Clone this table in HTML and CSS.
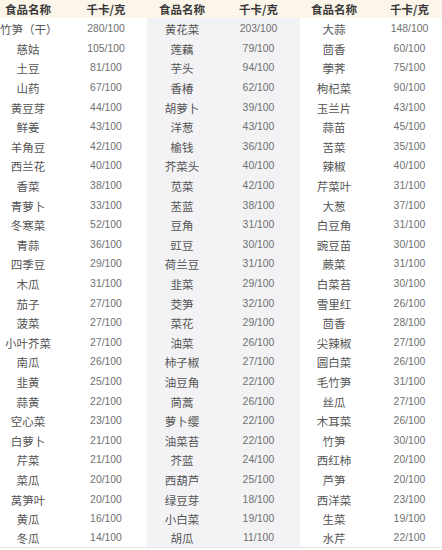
FILE: index.html
```html
<!DOCTYPE html>
<html lang="zh">
<head>
<meta charset="utf-8">
<link rel="stylesheet" href="styles.css">
</head>
<body>
<table class="cal">
<colgroup>
<col class="c1"><col class="c2"><col class="c3"><col class="c4"><col class="c5"><col class="c6">
</colgroup>
<thead>
<tr><th>食品名称</th><th class="v">千卡/克</th><th>食品名称</th><th class="v">千卡/克</th><th>食品名称</th><th class="v">千卡/克</th></tr>
</thead>
<tbody>
<tr><td>竹笋（干）</td><td class="v">280/100</td><td class="g">黄花菜</td><td class="g v">203/100</td><td>大蒜</td><td class="v">148/100</td></tr>
<tr><td>慈姑</td><td class="v">105/100</td><td class="g">莲藕</td><td class="g v">79/100</td><td>茴香</td><td class="v">60/100</td></tr>
<tr><td>土豆</td><td class="v">81/100</td><td class="g">芋头</td><td class="g v">94/100</td><td>荸荠</td><td class="v">75/100</td></tr>
<tr><td>山药</td><td class="v">67/100</td><td class="g">香椿</td><td class="g v">62/100</td><td>枸杞菜</td><td class="v">90/100</td></tr>
<tr><td>黄豆芽</td><td class="v">44/100</td><td class="g">胡萝卜</td><td class="g v">39/100</td><td>玉兰片</td><td class="v">43/100</td></tr>
<tr><td>鲜姜</td><td class="v">43/100</td><td class="g">洋葱</td><td class="g v">43/100</td><td>蒜苗</td><td class="v">45/100</td></tr>
<tr><td>羊角豆</td><td class="v">42/100</td><td class="g">榆钱</td><td class="g v">36/100</td><td>苦菜</td><td class="v">35/100</td></tr>
<tr><td>西兰花</td><td class="v">40/100</td><td class="g">芥菜头</td><td class="g v">40/100</td><td>辣椒</td><td class="v">40/100</td></tr>
<tr><td>香菜</td><td class="v">38/100</td><td class="g">苋菜</td><td class="g v">42/100</td><td>芹菜叶</td><td class="v">31/100</td></tr>
<tr><td>青萝卜</td><td class="v">33/100</td><td class="g">苤蓝</td><td class="g v">38/100</td><td>大葱</td><td class="v">37/100</td></tr>
<tr><td>冬寒菜</td><td class="v">52/100</td><td class="g">豆角</td><td class="g v">31/100</td><td>白豆角</td><td class="v">31/100</td></tr>
<tr><td>青蒜</td><td class="v">36/100</td><td class="g">豇豆</td><td class="g v">30/100</td><td>豌豆苗</td><td class="v">30/100</td></tr>
<tr><td>四季豆</td><td class="v">29/100</td><td class="g">荷兰豆</td><td class="g v">31/100</td><td>蕨菜</td><td class="v">31/100</td></tr>
<tr><td>木瓜</td><td class="v">31/100</td><td class="g">韭菜</td><td class="g v">29/100</td><td>白菜苔</td><td class="v">30/100</td></tr>
<tr><td>茄子</td><td class="v">27/100</td><td class="g">茭笋</td><td class="g v">32/100</td><td>雪里红</td><td class="v">26/100</td></tr>
<tr><td>菠菜</td><td class="v">27/100</td><td class="g">菜花</td><td class="g v">29/100</td><td>茴香</td><td class="v">28/100</td></tr>
<tr><td>小叶芥菜</td><td class="v">27/100</td><td class="g">油菜</td><td class="g v">26/100</td><td>尖辣椒</td><td class="v">27/100</td></tr>
<tr><td>南瓜</td><td class="v">26/100</td><td class="g">柿子椒</td><td class="g v">27/100</td><td>圆白菜</td><td class="v">26/100</td></tr>
<tr><td>韭黄</td><td class="v">25/100</td><td class="g">油豆角</td><td class="g v">22/100</td><td>毛竹笋</td><td class="v">31/100</td></tr>
<tr><td>蒜黄</td><td class="v">22/100</td><td class="g">茼蒿</td><td class="g v">26/100</td><td>丝瓜</td><td class="v">27/100</td></tr>
<tr><td>空心菜</td><td class="v">23/100</td><td class="g">萝卜缨</td><td class="g v">22/100</td><td>木耳菜</td><td class="v">26/100</td></tr>
<tr><td>白萝卜</td><td class="v">21/100</td><td class="g">油菜苔</td><td class="g v">22/100</td><td>竹笋</td><td class="v">30/100</td></tr>
<tr><td>芹菜</td><td class="v">21/100</td><td class="g">芥蓝</td><td class="g v">24/100</td><td>西红柿</td><td class="v">20/100</td></tr>
<tr><td>菜瓜</td><td class="v">20/100</td><td class="g">西葫芦</td><td class="g v">25/100</td><td>芦笋</td><td class="v">20/100</td></tr>
<tr><td>莴笋叶</td><td class="v">20/100</td><td class="g">绿豆芽</td><td class="g v">18/100</td><td>西洋菜</td><td class="v">23/100</td></tr>
<tr><td>黄瓜</td><td class="v">16/100</td><td class="g">小白菜</td><td class="g v">19/100</td><td>生菜</td><td class="v">19/100</td></tr>
<tr><td>冬瓜</td><td class="v">14/100</td><td class="g">胡瓜</td><td class="g v">11/100</td><td>水芹</td><td class="v">22/100</td></tr>
</tbody>
</table>
</body>
</html>
```

FILE: styles.css
```css
html, body {
  margin: 0;
  padding: 0;
  background: #ffffff;
}

.cal {
  width: 442px;
  border-collapse: collapse;
  table-layout: fixed;
  font-family: "Noto Sans CJK SC", "Liberation Sans", sans-serif;
  border-bottom: 1px solid #e3e3e3;
}

.c1 { width: 56px; }
.c2 { width: 91px; }
.c3 { width: 70px; }
.c4 { width: 83px; }
.c5 { width: 68px; }
.c6 { width: 74px; }

.cal thead tr {
  background: #fbf5ea;
}

.cal th {
  font-size: 11.5px;
  font-weight: bold;
  color: #3a3a3a;
  text-align: center;
  padding: 0;
  height: 18px;
  line-height: 16px;
  white-space: nowrap;
}

.cal td {
  height: 19.6px;
  padding: 3px 0 0 0;
  box-sizing: border-box;
  line-height: 16px;
  font-size: 11.5px;
  color: #555555;
  text-align: center;
  white-space: nowrap;
}

.cal td.v {
  font-family: "Liberation Sans", sans-serif;
  font-size: 10.4px;
  color: #707070;
}

.cal th:nth-child(2), .cal td:nth-child(2) {
  padding-left: 9px;
}

.cal th:nth-child(6), .cal td:nth-child(6) {
  padding-left: 9px;
}

.cal td.g {
  background: #f3f3f5;
}
```
